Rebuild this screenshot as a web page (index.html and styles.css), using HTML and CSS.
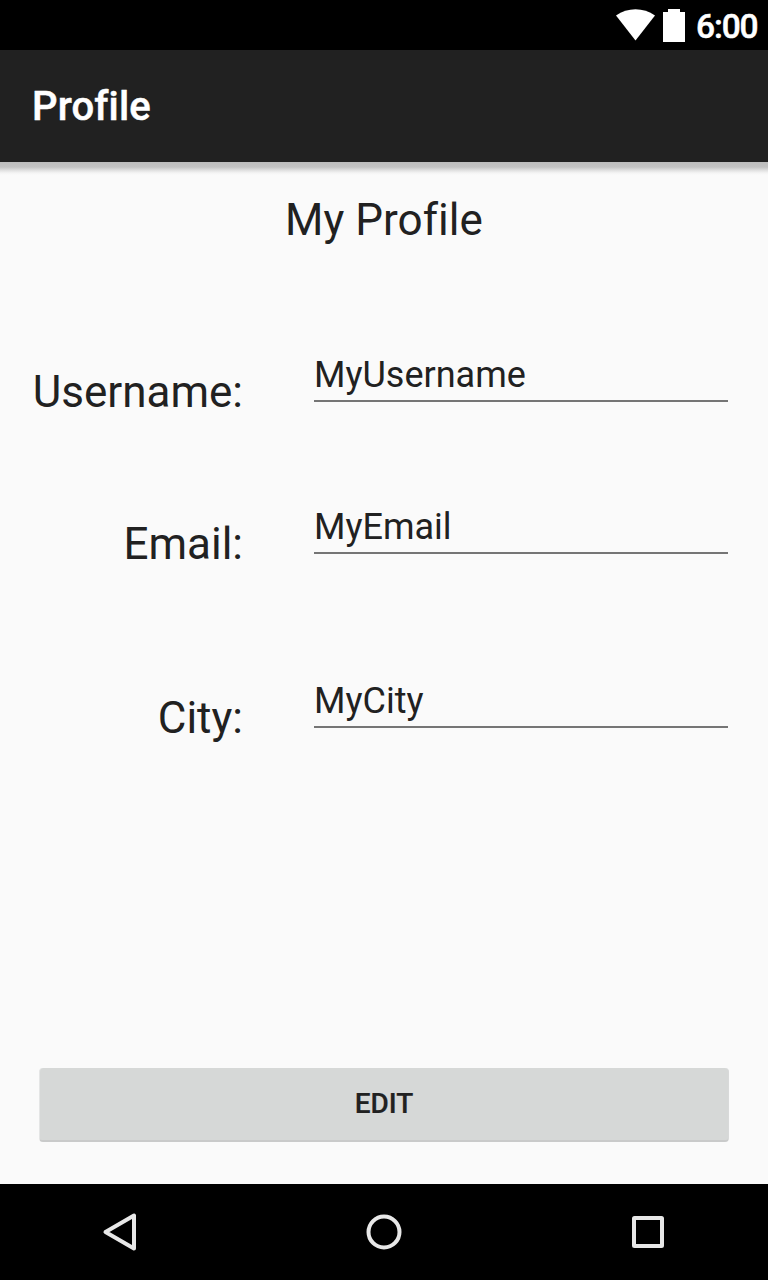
FILE: index.html
```html
<!DOCTYPE html>
<html lang="en">
<head>
<meta charset="utf-8">
<title>Profile</title>
<link rel="stylesheet" href="styles.css">
</head>
<body>
<div class="screen">
  <div class="status">
    <svg class="wifi" width="40" height="32" viewBox="0 0 40 32"><path d="M0 6.500C11.500-2 27.500-2 39 6.500L19.500 31.500Z" fill="#fff"/></svg>
    <svg class="battery" width="22" height="33" viewBox="0 0 22 33"><path d="M0 3H5V0H17V3H22V33H0Z" fill="#fff"/></svg>
    <span class="clock">6:00</span>
  </div>
  <header class="appbar"><h1 class="title">Profile</h1></header>
  <main class="content">
    <h2 class="heading">My Profile</h2>
    <form class="form">
      <div class="row"><span class="label">Username:</span><span class="field">MyUsername</span></div>
      <div class="row"><span class="label">Email:</span><span class="field">MyEmail</span></div>
      <div class="row row-city"><span class="label">City:</span><span class="field">MyCity</span></div>
    </form>
    <button class="edit" type="button">EDIT</button>
  </main>
  <nav class="nav">
    <svg width="48" height="48" viewBox="0 0 48 48"><path d="M38 7.500V40.500L9.500 24Z"/></svg>
    <svg width="48" height="48" viewBox="0 0 48 48"><circle cx="24" cy="24" r="15.500"/></svg>
    <svg width="48" height="48" viewBox="0 0 48 48"><rect x="10" y="10" width="28" height="28" rx="0.500"/></svg>
  </nav>
</div>
</body>
</html>
```
FILE: styles.css
```css
* { box-sizing: border-box; }
body { margin: 0; font-family: Roboto, sans-serif; font-variant-ligatures: none; color: #212121; }
.screen { width: 768px; height: 1280px; display: flex; flex-direction: column; background: #fafafa; }
.status { height: 50px; background: #000; display: flex; justify-content: flex-end; align-items: flex-start; padding: 9px 9px 0 0; }
.battery { margin: 0 10px 0 7px; }
.clock { width: 64px; padding-left: 1px; color: #fff; font-size: 33.500px; font-weight: 500; line-height: 36px; letter-spacing: -1.100px; -webkit-text-stroke: 0.500px #fff; white-space: nowrap; }
.appbar { height: 112px; background: #212121; padding: 2px 0 0 32px; display: flex; align-items: center; }
.title { margin: 0; color: #fff; font-size: 40px; font-weight: 500; line-height: 48px; letter-spacing: 0.150px; -webkit-text-stroke: 0.500px #fff; }
.content { flex: 1; display: flex; flex-direction: column; background: linear-gradient(#bdbdbd, #c3c3c3 5px, #dedede 8px, #f4f4f4 11px, #fafafa 13px); padding: 32px 39px 42px 32px; }
.heading { margin: 0; font-size: 44px; font-weight: 400; line-height: 52px; text-align: center; padding-left: 7px; letter-spacing: 0.050px; }
.form { flex: 1; padding-top: 104px; }
.row { display: flex; height: 152px; }
.row-city { margin-top: 22px; }
.label { width: 211px; padding-top: 16px; text-align: right; font-size: 44px; line-height: 52px; }
.field { width: 414px; height: 52px; margin-left: 71px; border-bottom: 2px solid #757575; font-size: 36px; line-height: 50px; }
.edit { height: 74px; margin-left: 7px; padding: 0 0 2px; border: 1px solid #d6d7d7; border-width: 0 1px 2px; border-color: #d6d7d7 #d8d9d9 #c9caca #e4e5e5; border-radius: 4px; background: #d6d8d7; color: #212121; font: 500 28px Roboto, sans-serif; -webkit-text-stroke: 0.200px #212121; }
.nav { height: 96px; background: #000; display: flex; justify-content: space-between; padding: 24px 96px; }
.nav svg { fill: none; stroke: #e8e8e8; stroke-width: 4; stroke-linejoin: round; }
```
